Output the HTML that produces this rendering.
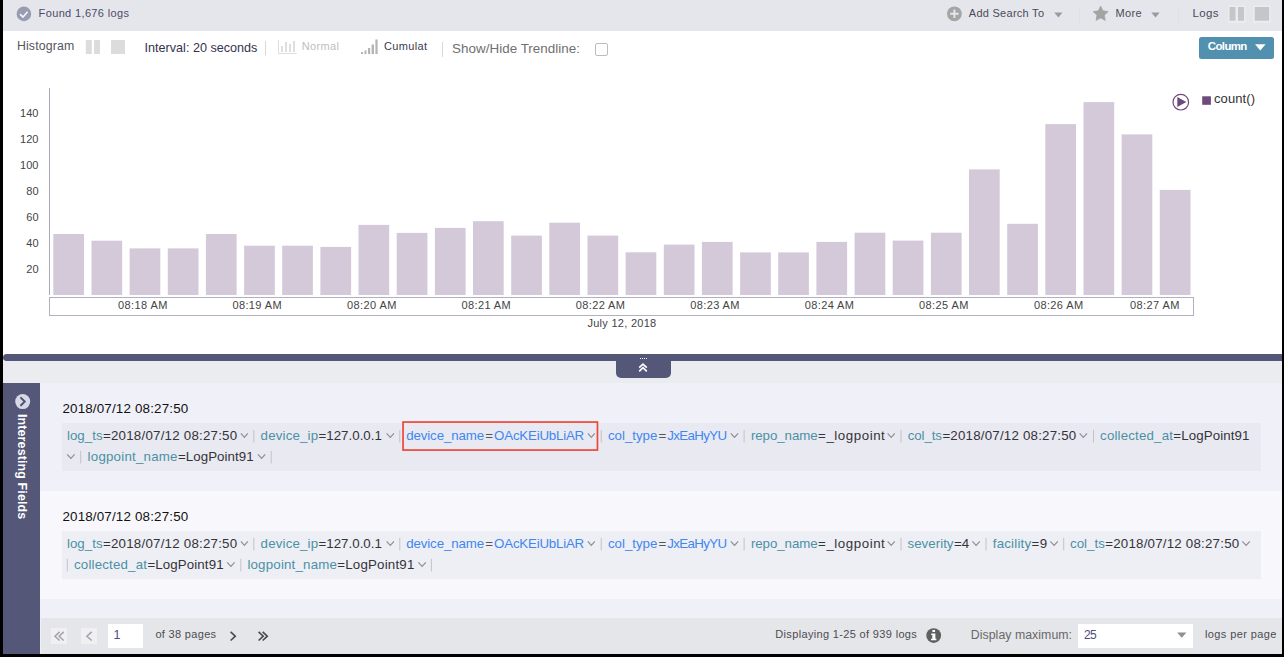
<!DOCTYPE html>
<html>
<head>
<meta charset="utf-8">
<title>Search results</title>
<style>
html,body{margin:0;padding:0;}
body{width:1284px;height:657px;overflow:hidden;background:#000;position:relative;font-family:"Liberation Sans",sans-serif;}
div,svg{position:absolute;}
.t{position:absolute;white-space:pre;line-height:1;font-family:"Liberation Sans",sans-serif;}
#app{left:3px;top:0;width:1279px;height:654px;background:#fff;overflow:hidden;}
#hdr{left:0;top:0;width:1279px;height:31px;background:#e5e6eb;}
#divider{left:0;top:354px;width:1279px;height:7px;background:#545778;border-radius:3.5px 0 0 3.5px;}
#band{left:0;top:361px;width:1279px;height:22px;background:#ebecef;}
#handle{left:613px;top:360px;width:55px;height:18px;background:#545778;border-radius:0 0 5px 5px;}
#side{left:0;top:383px;width:37px;height:271px;background:#545778;}
#row1{left:37px;top:383px;width:1242px;height:108px;background:#f0f0f8;}
#row2{left:37px;top:491px;width:1242px;height:108px;background:#f8f8fc;}
#row3{left:37px;top:599px;width:1242px;height:19px;background:#f0f0f8;}
.fbox{left:22px;width:1199px;height:47.5px;}
#row1 .fbox{top:40px;background:#e9e9f1;}
#row2 .fbox{top:40px;background:#eeeef5;}
#ftr{left:37px;top:618px;width:1241px;height:36px;background:#e5e6ea;border-left:1px solid #eff0f3;}
.pbtn{top:10px;width:16px;height:16px;background:#f0f0f3;}
.inp{background:#fff;top:6px;height:24px;}
#colbtn{left:1196px;top:37px;width:75px;height:22px;background:#5190ae;border-radius:2.5px;}
#chk{left:592px;top:43px;width:11px;height:11px;border:1px solid #bdbdbd;border-radius:2px;background:#fff;}
#sidetxt{left:15px;top:414.2px;width:0;height:0;}
#sidetxt span{position:absolute;left:0;top:0;white-space:pre;font-weight:700;font-size:12.5px;letter-spacing:0.1px;line-height:1;color:#fff;transform-origin:0 0;transform:rotate(90deg) translate(0,-100%);}

</style>
</head>
<body>
<div id="app">
  <div id="hdr"></div>
  <div id="colbtn"></div>
  <div id="chk"></div>
  <div id="divider"></div>
  <div id="band"></div>
  <div id="handle"></div>
  <div id="side"></div>
  <div id="row1"><div class="fbox"></div></div>
  <div id="row2"><div class="fbox"></div></div>
  <div id="row3"></div>
  <div id="ftr">
    <div class="pbtn" style="left:10px"></div>
    <div class="pbtn" style="left:40px"></div>
    <div class="inp" style="left:67px;width:35px"></div>
    <div class="inp" style="left:1037px;width:115px"></div>
  </div>
</div>
<div id="sidetxt"><span>Interesting Fields</span></div>
<svg id="gfx" width="1284" height="657" viewBox="0 0 1284 657" style="left:0;top:0">
  <!-- header icons -->
  <circle cx="23.9" cy="13.9" r="7.3" fill="#999bb0"/>
  <polyline points="20.1,14.2 23,17 27.6,11.8" fill="none" stroke="#f6f6fa" stroke-width="1.6"/>
  <circle cx="954.4" cy="13.8" r="7.4" fill="#a5a5a5"/>
  <path d="M950.2 13.8h8.4M954.4 9.6v8.4" stroke="#e6e7ec" stroke-width="1.9" fill="none"/>
  <path d="M1054.3 12.6h8.2l-4.1 4.9z" fill="#9b9b9b"/>
  <rect x="1079" y="8" width="1" height="15" fill="#dfe0e5"/>
  <path d="M1100.65 6.10 L1102.94 10.84 L1108.16 11.56 L1104.36 15.21 L1105.29 20.39 L1100.65 17.90 L1096.01 20.39 L1096.94 15.21 L1093.14 11.56 L1098.36 10.84z" fill="#a3a3a3" stroke="#a3a3a3" stroke-width="0.7" stroke-linejoin="round"/>
  <path d="M1151.3 12.4h8.4l-4.2 5z" fill="#9b9b9b"/>
  <rect x="1178" y="8" width="1" height="15" fill="#dfe0e5"/>
  <rect x="1228" y="5.5" width="17.5" height="17.5" fill="#ebecf0"/>
  <rect x="1253" y="5.5" width="17.5" height="17.5" fill="#ebecf0"/>
  <rect x="1229.5" y="7" width="6" height="13.7" fill="#c5c5ca"/>
  <rect x="1238" y="7" width="6" height="13.7" fill="#c5c5ca"/>
  <rect x="1254.7" y="7" width="14.4" height="13.7" fill="#c5c5ca"/>
  <!-- toolbar icons -->
  <rect x="85.8" y="40" width="6" height="14" fill="#dcdcdc"/>
  <rect x="94" y="40" width="6" height="14" fill="#dcdcdc"/>
  <rect x="111" y="40" width="14" height="14" fill="#dcdcdc"/>
  <rect x="265" y="41" width="1" height="14.5" fill="#d8d8d8"/>
  <g fill="#dedede">
    <rect x="278" y="39.7" width="1" height="14.3"/>
    <rect x="278" y="53" width="18.7" height="1"/>
    <rect x="281" y="46" width="2" height="6"/>
    <rect x="285" y="42" width="2" height="10"/>
    <rect x="289" y="44" width="2" height="8"/>
    <rect x="293" y="41" width="2" height="11"/>
  </g>
  <g fill="#b4b4b4">
    <rect x="361" y="52" width="2" height="2"/>
    <rect x="364.5" y="50.5" width="2" height="3.5"/>
    <rect x="368" y="48" width="2.2" height="6"/>
    <rect x="371.6" y="44.5" width="2.4" height="9.5"/>
    <rect x="375.4" y="39.5" width="2.2" height="14.5"/>
  </g>
  <rect x="442" y="42" width="1" height="15" fill="#d8d8d8"/>
  <path d="M1255 44.2h10.6l-5.3 6.2z" fill="#fff"/>
  <!-- chart -->
  <rect x="49" y="88" width="1" height="207" fill="#a9a9be"/>
  <rect x="49.5" y="297.5" width="1144" height="18" fill="#fff" stroke="#b0b0c3" stroke-width="1"/>
  <g fill="#d4c9d9">
    <rect x="53.3" y="234.0" width="30.7" height="61.0"/>
    <rect x="91.5" y="240.7" width="30.7" height="54.3"/>
    <rect x="129.6" y="248.4" width="30.7" height="46.6"/>
    <rect x="167.8" y="248.4" width="30.7" height="46.6"/>
    <rect x="205.9" y="234.0" width="30.7" height="61.0"/>
    <rect x="244.1" y="245.7" width="30.7" height="49.3"/>
    <rect x="282.2" y="245.7" width="30.7" height="49.3"/>
    <rect x="320.4" y="246.9" width="30.7" height="48.1"/>
    <rect x="358.5" y="224.9" width="30.7" height="70.1"/>
    <rect x="396.7" y="232.9" width="30.7" height="62.1"/>
    <rect x="434.9" y="227.9" width="30.7" height="67.1"/>
    <rect x="473.0" y="221.2" width="30.7" height="73.8"/>
    <rect x="511.2" y="235.6" width="30.7" height="59.4"/>
    <rect x="549.3" y="222.7" width="30.7" height="72.3"/>
    <rect x="587.5" y="235.6" width="30.7" height="59.4"/>
    <rect x="625.6" y="252.3" width="30.7" height="42.7"/>
    <rect x="663.8" y="244.6" width="30.7" height="50.4"/>
    <rect x="701.9" y="241.9" width="30.7" height="53.1"/>
    <rect x="740.1" y="252.4" width="30.7" height="42.6"/>
    <rect x="778.2" y="252.4" width="30.7" height="42.6"/>
    <rect x="816.4" y="241.9" width="30.7" height="53.1"/>
    <rect x="854.6" y="232.7" width="30.7" height="62.3"/>
    <rect x="892.7" y="240.6" width="30.7" height="54.4"/>
    <rect x="930.9" y="232.7" width="30.7" height="62.3"/>
    <rect x="969.0" y="169.4" width="30.7" height="125.6"/>
    <rect x="1007.2" y="223.8" width="30.7" height="71.2"/>
    <rect x="1045.3" y="124.1" width="30.7" height="170.9"/>
    <rect x="1083.5" y="102.1" width="30.7" height="192.9"/>
    <rect x="1121.6" y="134.4" width="30.7" height="160.6"/>
    <rect x="1159.8" y="189.9" width="30.7" height="105.1"/>
  </g>
  <circle cx="1180.8" cy="102.2" r="7.8" fill="#fff" stroke="#6d4a7b" stroke-width="1.2"/>
  <path d="M1177.3 97v10l9-5z" fill="#6d4a7b"/>
  <rect x="1202.2" y="96.3" width="8.7" height="8.5" fill="#6d4a7b"/>
  <!-- handle -->
  <g fill="#fff">
    <rect x="640" y="358" width="1" height="1"/><rect x="642" y="358" width="1" height="1"/><rect x="644" y="358" width="1" height="1"/><rect x="646" y="358" width="1" height="1"/>
  </g>
  <path d="M639.2 367.7l3.8-3.6 3.8 3.6M639.2 371.3l3.8-3.6 3.8 3.6" fill="none" stroke="#fff" stroke-width="1.7"/>
  <!-- sidebar icon -->
  <circle cx="22.7" cy="401.6" r="7.5" fill="#d7d8e5"/>
  <polyline points="21,397.9 24.7,401.6 21,405.3" fill="none" stroke="#4f5274" stroke-width="2" stroke-linecap="round"/>
  <!-- field chevrons / separators -->
  <g fill="none" stroke="#8d8d96" stroke-width="1.2">
    <polyline points="240.9,433.3 244.4,437.3 247.8,433.3"/>
    <polyline points="386.6,433.3 390.3,437.3 394.0,433.3"/>
    <polyline points="587.8,433.3 591.3,437.3 594.8,433.3"/>
    <polyline points="730.8,433.3 734.5,437.3 738.2,433.3"/>
    <polyline points="887.6,433.3 891.2,437.3 894.8,433.3"/>
    <polyline points="240.9,541.3 244.4,545.3 247.8,541.3"/>
    <polyline points="386.6,541.3 390.3,545.3 394.0,541.3"/>
    <polyline points="587.8,541.3 591.3,545.3 594.8,541.3"/>
    <polyline points="730.8,541.3 734.5,545.3 738.2,541.3"/>
    <polyline points="887.6,541.3 891.2,545.3 894.8,541.3"/>
    <polyline points="1079.6,433.3 1083.3,437.3 1087.0,433.3"/>
    <polyline points="67.2,454.3 70.9,458.3 74.6,454.3"/>
    <polyline points="258.0,454.3 261.6,458.3 265.2,454.3"/>
    <polyline points="972.4,541.3 976.1,545.3 979.8,541.3"/>
    <polyline points="1050.4,541.3 1054.1,545.3 1057.8,541.3"/>
    <polyline points="1242.4,541.3 1246.1,545.3 1249.8,541.3"/>
    <polyline points="227.2,562.3 230.9,566.3 234.6,562.3"/>
    <polyline points="418.4,562.3 422.1,566.3 425.8,562.3"/>
  </g>
  <g fill="#c2c2cc">
    <rect x="253.3" y="429.9" width="1" height="12.5"/>
    <rect x="399.3" y="429.9" width="1" height="12.5"/>
    <rect x="600.7" y="429.9" width="1" height="12.5"/>
    <rect x="743.6" y="429.9" width="1" height="12.5"/>
    <rect x="900.5" y="429.9" width="1" height="12.5"/>
    <rect x="253.3" y="537.9" width="1" height="12.5"/>
    <rect x="399.3" y="537.9" width="1" height="12.5"/>
    <rect x="600.7" y="537.9" width="1" height="12.5"/>
    <rect x="743.6" y="537.9" width="1" height="12.5"/>
    <rect x="900.5" y="537.9" width="1" height="12.5"/>
    <rect x="1093.0" y="429.9" width="1" height="12.5"/>
    <rect x="80.2" y="450.9" width="1" height="12.5"/>
    <rect x="270.7" y="450.9" width="1" height="12.5"/>
    <rect x="985.5" y="537.9" width="1" height="12.5"/>
    <rect x="1063.2" y="537.9" width="1" height="12.5"/>
    <rect x="66.8" y="558.9" width="1" height="12.5"/>
    <rect x="240.3" y="558.9" width="1" height="12.5"/>
    <rect x="430.9" y="558.9" width="1" height="12.5"/>
  </g>
  <!-- highlighted field outline -->
  <rect x="403.05" y="422.05" width="194.4" height="28" fill="none" stroke="#ee4637" stroke-width="1.7"/>
  <!-- footer icons -->
  <g fill="none" stroke="#a3a3a6" stroke-width="1.5">
    <polyline points="59.6,631.9 55,636.2 59.6,640.5"/><polyline points="63.7,631.9 59.1,636.2 63.7,640.5"/>
    <polyline points="91.7,631.9 86.9,636.2 91.7,640.5"/>
  </g>
  <g fill="none" stroke="#4a4a4a" stroke-width="1.6">
    <polyline points="230.6,631.9 235.3,636.2 230.6,640.5"/>
    <polyline points="258.6,631.9 263.2,636.2 258.6,640.5"/><polyline points="262.7,631.9 267.3,636.2 262.7,640.5"/>
  </g>
  <circle cx="933.7" cy="635.6" r="7.4" fill="#606060"/>
  <path d="M931.2 633.4h4.2v5.3h1.0v1.5h-5.4v-1.5h1.3v-3.8h-1.1zM932.4 630.1h2.7v2h-2.7z" fill="#fff"/>
  <path d="M1177.1 632.6h9.3l-4.65 5.2z" fill="#8f8f8f"/>
</svg>

<span class="t" style="left:38.6px;top:8.19px;font-size:11px;color:#4b4b68;letter-spacing:0.36px;">Found 1,676 logs</span>
<span class="t" style="left:968.8px;top:7.69px;font-size:11px;color:#4a4a58;letter-spacing:0.27px;">Add Search To</span>
<span class="t" style="left:1115.5px;top:8.49px;font-size:11px;color:#4a4a58;letter-spacing:0.35px;">More</span>
<span class="t" style="left:1192.4px;top:8.07px;font-size:11.5px;color:#4a4a58;letter-spacing:0.42px;">Logs</span>
<span class="t" style="left:16.9px;top:40.49px;font-size:12.3px;color:#555560;letter-spacing:0.16px;">Histogram</span>
<span class="t" style="left:144.6px;top:42.23px;font-size:12.6px;color:#33334f;">Interval: 20 seconds</span>
<span class="t" style="left:301.7px;top:40.69px;font-size:11px;color:#bebebe;letter-spacing:0.35px;">Normal</span>
<span class="t" style="left:384.0px;top:40.69px;font-size:11px;color:#3c3c4e;letter-spacing:0.34px;">Cumulat</span>
<span class="t" style="left:452.0px;top:42.46px;font-size:13.4px;color:#707070;letter-spacing:0.04px;">Show/Hide Trendline:</span>
<span class="t" style="left:1207.8px;top:41.17px;font-size:11.5px;color:#ffffff;font-weight:700;letter-spacing:-0.64px;">Column</span>
<span class="t" style="left:20.1px;top:107.69px;font-size:11px;color:#444;">140</span>
<span class="t" style="left:20.1px;top:133.69px;font-size:11px;color:#444;">120</span>
<span class="t" style="left:20.1px;top:159.69px;font-size:11px;color:#444;">100</span>
<span class="t" style="left:26.3px;top:185.69px;font-size:11px;color:#444;letter-spacing:-0.01px;">80</span>
<span class="t" style="left:26.3px;top:211.69px;font-size:11px;color:#444;letter-spacing:-0.01px;">60</span>
<span class="t" style="left:26.3px;top:237.69px;font-size:11px;color:#444;letter-spacing:-0.01px;">40</span>
<span class="t" style="left:26.3px;top:263.69px;font-size:11px;color:#444;letter-spacing:-0.01px;">20</span>
<span class="t" style="left:118.1px;top:300.29px;font-size:11px;color:#444;letter-spacing:0.39px;">08:18 AM</span>
<span class="t" style="left:232.4px;top:300.29px;font-size:11px;color:#444;letter-spacing:0.39px;">08:19 AM</span>
<span class="t" style="left:347.1px;top:300.29px;font-size:11px;color:#444;letter-spacing:0.39px;">08:20 AM</span>
<span class="t" style="left:461.5px;top:300.29px;font-size:11px;color:#444;letter-spacing:0.39px;">08:21 AM</span>
<span class="t" style="left:575.7px;top:300.29px;font-size:11px;color:#444;letter-spacing:0.39px;">08:22 AM</span>
<span class="t" style="left:690.2px;top:300.29px;font-size:11px;color:#444;letter-spacing:0.39px;">08:23 AM</span>
<span class="t" style="left:804.7px;top:300.29px;font-size:11px;color:#444;letter-spacing:0.39px;">08:24 AM</span>
<span class="t" style="left:919.1px;top:300.29px;font-size:11px;color:#444;letter-spacing:0.39px;">08:25 AM</span>
<span class="t" style="left:1033.9px;top:300.29px;font-size:11px;color:#444;letter-spacing:0.39px;">08:26 AM</span>
<span class="t" style="left:1130.1px;top:300.29px;font-size:11px;color:#444;letter-spacing:0.39px;">08:27 AM</span>
<span class="t" style="left:587.4px;top:318.49px;font-size:11px;color:#444;letter-spacing:0.28px;">July 12, 2018</span>
<span class="t" style="left:1214.0px;top:91.70px;font-size:13px;color:#333;letter-spacing:0.09px;">count()</span>
<span class="t" style="left:62.4px;top:402.36px;font-size:13.4px;color:#111;letter-spacing:0.17px;">2018/07/12 08:27:50</span>
<span class="t" style="left:66.9px;top:428.64px;font-size:13.3px;color:#4b91a5;letter-spacing:0.04px;">log_ts</span>
<span class="t" style="left:103.0px;top:428.64px;font-size:13.3px;color:#333338;letter-spacing:0.23px;">=2018/07/12 08:27:50</span>
<span class="t" style="left:260.6px;top:428.64px;font-size:13.3px;color:#4b91a5;letter-spacing:0.16px;">device_ip</span>
<span class="t" style="left:318.5px;top:428.64px;font-size:13.3px;color:#333338;letter-spacing:0.02px;">=127.0.0.1</span>
<span class="t" style="left:406.2px;top:428.64px;font-size:13.3px;color:#3f87f0;letter-spacing:-0.12px;">device_name</span>
<span class="t" style="left:485.3px;top:428.64px;font-size:13.3px;color:#555;">=</span>
<span class="t" style="left:494.1px;top:428.64px;font-size:13.3px;color:#3f87f0;letter-spacing:-0.21px;">OAcKEiUbLiAR</span>
<span class="t" style="left:608.0px;top:428.64px;font-size:13.3px;color:#3f87f0;letter-spacing:-0.03px;">col_type</span>
<span class="t" style="left:658.5px;top:428.64px;font-size:13.3px;color:#555;">=</span>
<span class="t" style="left:667.3px;top:428.64px;font-size:13.3px;color:#3f87f0;letter-spacing:-0.63px;">JxEaHyYU</span>
<span class="t" style="left:750.9px;top:428.64px;font-size:13.3px;color:#4b91a5;letter-spacing:-0.06px;">repo_name</span>
<span class="t" style="left:818.1px;top:428.64px;font-size:13.3px;color:#333338;letter-spacing:0.55px;">=_logpoint</span>
<span class="t" style="left:62.4px;top:510.36px;font-size:13.4px;color:#111;letter-spacing:0.17px;">2018/07/12 08:27:50</span>
<span class="t" style="left:66.9px;top:536.64px;font-size:13.3px;color:#4b91a5;letter-spacing:0.04px;">log_ts</span>
<span class="t" style="left:103.0px;top:536.64px;font-size:13.3px;color:#333338;letter-spacing:0.23px;">=2018/07/12 08:27:50</span>
<span class="t" style="left:260.6px;top:536.64px;font-size:13.3px;color:#4b91a5;letter-spacing:0.16px;">device_ip</span>
<span class="t" style="left:318.5px;top:536.64px;font-size:13.3px;color:#333338;letter-spacing:0.02px;">=127.0.0.1</span>
<span class="t" style="left:406.2px;top:536.64px;font-size:13.3px;color:#3f87f0;letter-spacing:-0.12px;">device_name</span>
<span class="t" style="left:485.3px;top:536.64px;font-size:13.3px;color:#555;">=</span>
<span class="t" style="left:494.1px;top:536.64px;font-size:13.3px;color:#3f87f0;letter-spacing:-0.21px;">OAcKEiUbLiAR</span>
<span class="t" style="left:608.0px;top:536.64px;font-size:13.3px;color:#3f87f0;letter-spacing:-0.03px;">col_type</span>
<span class="t" style="left:658.5px;top:536.64px;font-size:13.3px;color:#555;">=</span>
<span class="t" style="left:667.3px;top:536.64px;font-size:13.3px;color:#3f87f0;letter-spacing:-0.63px;">JxEaHyYU</span>
<span class="t" style="left:750.9px;top:536.64px;font-size:13.3px;color:#4b91a5;letter-spacing:-0.06px;">repo_name</span>
<span class="t" style="left:818.1px;top:536.64px;font-size:13.3px;color:#333338;letter-spacing:0.55px;">=_logpoint</span>
<span class="t" style="left:907.7px;top:428.64px;font-size:13.3px;color:#4b91a5;letter-spacing:-0.09px;">col_ts</span>
<span class="t" style="left:942.4px;top:428.64px;font-size:13.3px;color:#333338;letter-spacing:0.21px;">=2018/07/12 08:27:50</span>
<span class="t" style="left:1100.1px;top:428.64px;font-size:13.3px;color:#4b91a5;letter-spacing:0.17px;">collected_at</span>
<span class="t" style="left:1173.3px;top:428.64px;font-size:13.3px;color:#333338;letter-spacing:0.11px;">=LogPoint91</span>
<span class="t" style="left:87.6px;top:449.64px;font-size:13.3px;color:#4b91a5;letter-spacing:0.22px;">logpoint_name</span>
<span class="t" style="left:177.9px;top:449.64px;font-size:13.3px;color:#333338;letter-spacing:0.08px;">=LogPoint91</span>
<span class="t" style="left:907.5px;top:536.64px;font-size:13.3px;color:#4b91a5;letter-spacing:0.03px;">severity</span>
<span class="t" style="left:953.9px;top:536.64px;font-size:13.3px;color:#333338;letter-spacing:0.13px;">=4</span>
<span class="t" style="left:992.8px;top:536.64px;font-size:13.3px;color:#4b91a5;letter-spacing:0.19px;">facility</span>
<span class="t" style="left:1031.5px;top:536.64px;font-size:13.3px;color:#333338;letter-spacing:0.43px;">=9</span>
<span class="t" style="left:1070.1px;top:536.64px;font-size:13.3px;color:#4b91a5;letter-spacing:-0.01px;">col_ts</span>
<span class="t" style="left:1105.2px;top:536.64px;font-size:13.3px;color:#333338;letter-spacing:0.22px;">=2018/07/12 08:27:50</span>
<span class="t" style="left:74.0px;top:557.64px;font-size:13.3px;color:#4b91a5;letter-spacing:0.18px;">collected_at</span>
<span class="t" style="left:147.4px;top:557.64px;font-size:13.3px;color:#333338;letter-spacing:0.11px;">=LogPoint91</span>
<span class="t" style="left:247.4px;top:557.64px;font-size:13.3px;color:#4b91a5;letter-spacing:0.19px;">logpoint_name</span>
<span class="t" style="left:337.3px;top:557.64px;font-size:13.3px;color:#333338;letter-spacing:0.2px;">=LogPoint91</span>
<span class="t" style="left:113.6px;top:629.12px;font-size:12.5px;color:#4c5080;">1</span>
<span class="t" style="left:155.4px;top:628.79px;font-size:11px;color:#4c4c50;letter-spacing:0.32px;">of 38 pages</span>
<span class="t" style="left:775.3px;top:628.79px;font-size:11px;color:#4c4c50;letter-spacing:0.34px;">Displaying 1-25 of 939 logs</span>
<span class="t" style="left:970.8px;top:628.59px;font-size:12.3px;color:#686868;letter-spacing:0.05px;">Display maximum:</span>
<span class="t" style="left:1084.0px;top:628.84px;font-size:12px;color:#4a4e7a;letter-spacing:-0.56px;">25</span>
<span class="t" style="left:1205.0px;top:628.79px;font-size:11px;color:#4c4c50;letter-spacing:0.39px;">logs per page</span>
</body>
</html>
